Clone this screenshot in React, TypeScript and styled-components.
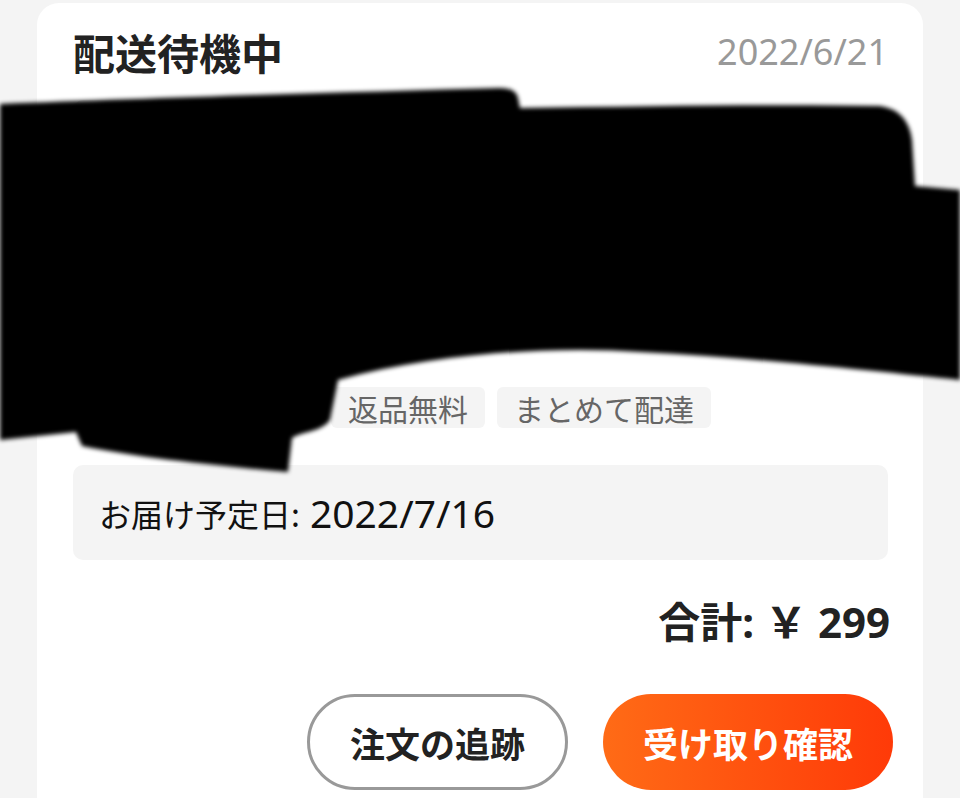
import React from "react";
import styled, { createGlobalStyle } from "styled-components";

const GlobalStyle = createGlobalStyle`
  html, body {
    margin: 0;
    padding: 0;
    background: #f4f4f4;
  }
  body {
    font-family: "Noto Sans", "Noto Sans CJK JP", sans-serif;
  }
`;

const Page = styled.div`
  position: relative;
  width: 960px;
  height: 798px;
  overflow: hidden;
  padding: 3px 37px 0 37px;
  box-sizing: border-box;
`;

const Card = styled.div`
  background: #fff;
  border-radius: 22px;
  padding: 25px 35px 40px 36px;
  min-height: 900px;
  box-sizing: border-box;
`;

const Header = styled.div`
  display: flex;
  justify-content: space-between;
  align-items: center;
  height: 48px;
`;

const Status = styled.h1`
  margin: 0;
  font-family: "Noto Sans CJK JP", sans-serif;
  font-size: 42px;
  font-weight: 700;
  color: #222;
  line-height: 48px;
`;

const OrderDate = styled.span`
  font-family: "Noto Sans", sans-serif;
  font-size: 36px;
  color: #999;
  line-height: 48px;
`;

const ProductRow = styled.div`
  display: flex;
  gap: 18px;
  margin-top: 24px;
  height: 328px;
`;

const Thumb = styled.div`
  width: 240px;
  height: 240px;
  flex-shrink: 0;
  border-radius: 10px;
  background: #e8e8e8;
`;

const Info = styled.div`
  display: flex;
  flex-direction: column;
  justify-content: space-between;
  flex: 1;
`;

const ProductName = styled.div`
  font-family: "Noto Sans CJK JP", sans-serif;
  font-size: 30px;
  color: #222;
  line-height: 40px;
`;

const Tags = styled.div`
  display: flex;
  gap: 12px;
`;

const Tag = styled.span`
  display: inline-flex;
  align-items: center;
  height: 41px;
  padding: 0 17px;
  border-radius: 6px;
  background: #f4f4f4;
  color: #666;
  font-family: "Noto Sans CJK JP", sans-serif;
  font-size: 30px;
`;

const Delivery = styled.div`
  display: flex;
  align-items: center;
  gap: 10px;
  margin-top: 37px;
  height: 95px;
  padding: 0 26px;
  border-radius: 10px;
  background: #f4f4f4;
  color: #111;
`;

const DeliveryLabel = styled.span`
  font-family: "Noto Sans CJK JP", sans-serif;
  font-size: 32px;
`;

const DeliveryValue = styled.span`
  font-family: "Noto Sans", sans-serif;
  font-size: 39px;
`;

const Total = styled.div`
  margin-top: 38px;
  text-align: right;
  font-family: "Noto Sans", "Noto Sans CJK JP", sans-serif;
  font-size: 42px;
  font-weight: 700;
  line-height: 48px;
  color: #222;
  margin-right: -2px;
`;

const Actions = styled.div`
  display: flex;
  justify-content: flex-end;
  gap: 35px;
  margin-top: 48px;
  margin-right: -5px;
`;

const Button = styled.button<{ $primary?: boolean }>`
  height: 96px;
  padding: 0 40px;
  border-radius: 48px;
  font-family: "Noto Sans CJK JP", sans-serif;
  font-size: 35px;
  font-weight: 700;
  box-sizing: border-box;
  cursor: pointer;
  border: ${(p) => (p.$primary ? "none" : "3px solid #999")};
  background: ${(p) =>
    p.$primary ? "linear-gradient(90deg, #ff6b16, #ff3a08)" : "#fff"};
  color: ${(p) => (p.$primary ? "#fff" : "#222")};
`;

const Redaction = styled.svg`
  position: absolute;
  top: 0;
  left: 0;
  pointer-events: none;
`;

const App = () => {
  return (
    <Page>
      <GlobalStyle />
      <Card>
        <Header>
          <Status>配送待機中</Status>
          <OrderDate>2022/6/21</OrderDate>
        </Header>
        <ProductRow>
          <Thumb />
          <Info>
            <ProductName>商品名</ProductName>
            <Tags>
              <Tag>返品無料</Tag>
              <Tag>まとめて配達</Tag>
            </Tags>
          </Info>
        </ProductRow>
        <Delivery>
          <DeliveryLabel>お届け予定日:</DeliveryLabel>
          <DeliveryValue>2022/7/16</DeliveryValue>
        </Delivery>
        <Total>合計: ￥ 299</Total>
        <Actions>
          <Button>注文の追跡</Button>
          <Button $primary>受け取り確認</Button>
        </Actions>
      </Card>
      <Redaction width="960" height="798" viewBox="0 0 960 798">
        <defs>
          <filter id="soft">
            <feGaussianBlur stdDeviation="2.2" />
          </filter>
        </defs>
        <path
          filter="url(#soft)"
          fill="#000"
          d="M0,104 C150,98 350,92 500,88 Q516,88 518,98 L520,108 C650,106 780,104 880,106 Q908,110 912,140 L915,186 L960,190 L960,380 C880,372 760,358 640,352 C560,346 440,352 338,380 L330,420 C322,432 300,432 292,438 L288,472 C220,466 140,458 82,446 L76,432 L0,440 Z"
        />
      </Redaction>
    </Page>
  );
};

export default App;
